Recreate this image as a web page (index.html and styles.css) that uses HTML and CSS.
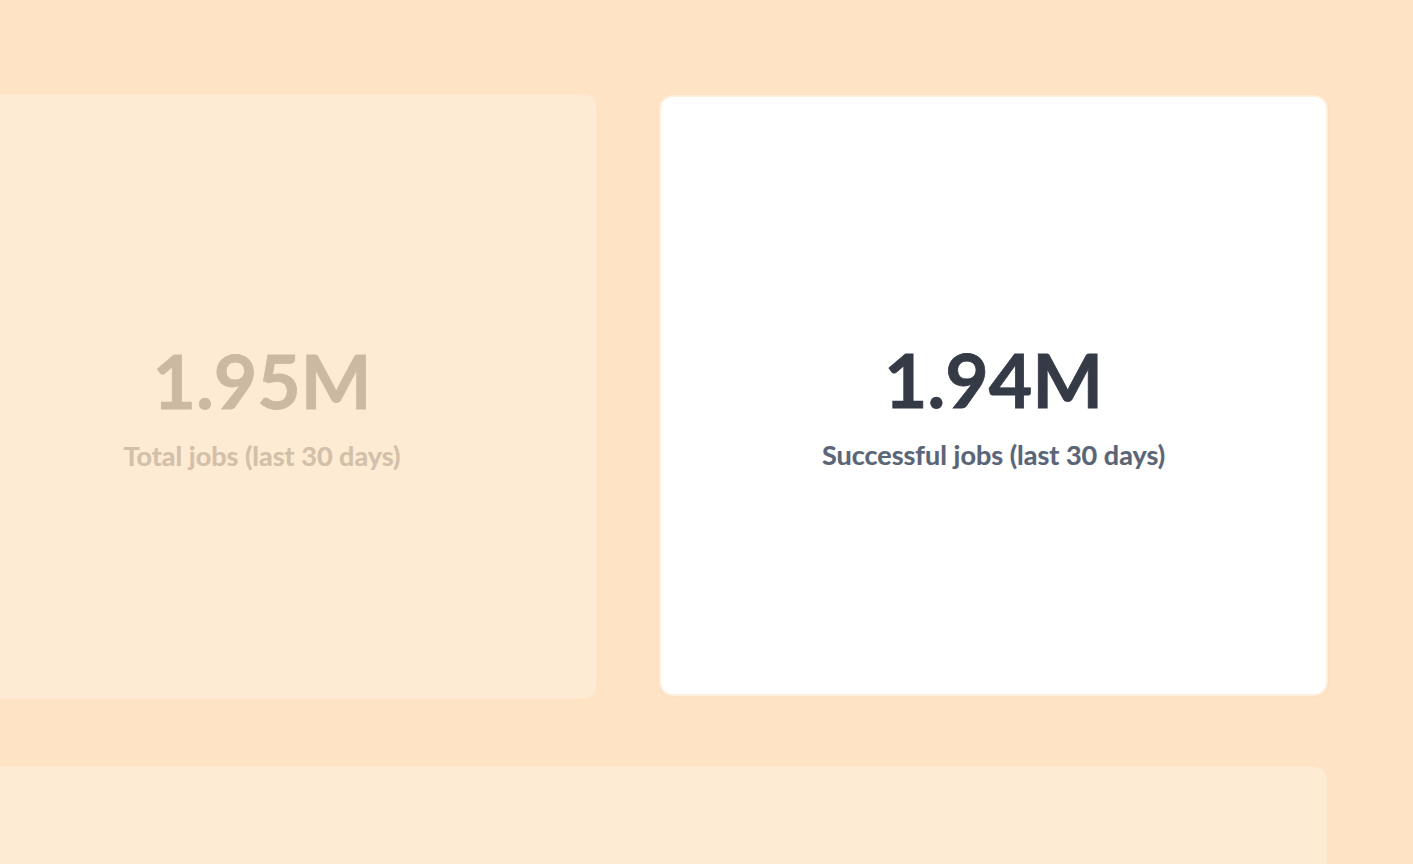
FILE: index.html
```html
<!DOCTYPE html>
<html>
<head>
<meta charset="utf-8">
<link rel="stylesheet" href="styles.css">
</head>
<body>
<div class="page">
  <div class="row">
    <div class="card card-dim">
      <div class="stat">
        <div class="stat-value">1.95M</div>
        <div class="stat-label">Total jobs (last 30 days)</div>
      </div>
    </div>
    <div class="card card-focus">
      <div class="stat">
        <div class="stat-value">1.94M</div>
        <div class="stat-label">Successful jobs (last 30 days)</div>
      </div>
    </div>
  </div>
  <div class="card card-dim card-wide"></div>
</div>
</body>
</html>
```
FILE: styles.css
```css
html, body {
  margin: 0;
  padding: 0;
  background: #fee3c4;
  overflow: hidden;
  height: 100%;
}
body {
  font-family: "Lato", "Liberation Sans", sans-serif;
}
.page {
  padding-top: 95px;
  margin-left: -72px;
  width: 1398px;
  display: flex;
  flex-direction: column;
  gap: 69px;
}
.row {
  display: flex;
  gap: 65px;
  align-items: flex-start;
}
.card {
  border-radius: 12px;
  box-sizing: border-box;
}
.card-dim {
  background: #feebd3;
  box-shadow: 0 0 0 1px #fde6cc;
}
.row .card-dim {
  width: 668px;
  height: 603px;
}
.card-focus {
  width: 665px;
  height: 597px;
  margin-top: 2px;
  background: #ffffff;
  box-shadow: 0 0 0 2px #fdeedd, 0 1px 4px rgba(200, 150, 100, 0.15);
}
.card-wide {
  width: 1398px;
  height: 120px;
}
.card .stat {
  height: 100%;
  box-sizing: border-box;
  padding-top: 22px;
  display: flex;
  flex-direction: column;
  align-items: center;
  justify-content: center;
}
.stat-value {
  font-size: 75px;
  font-weight: 700;
  line-height: 1;
  color: #343a46;
  -webkit-text-stroke: 0.8px currentColor;
}
.stat-label {
  margin-top: 21px;
  font-size: 27px;
  font-weight: 700;
  color: #5a6577;
  -webkit-text-stroke: 0.2px currentColor;
}
.card-dim .stat-value {
  color: #cbb9a3;
}
.card-dim .stat-label {
  color: #d2c0aa;
}
```
